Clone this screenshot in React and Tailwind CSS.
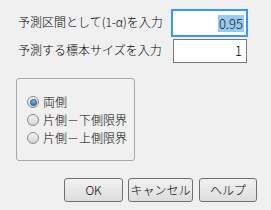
const font = { fontFamily: '"Noto Sans CJK JP", "Noto Sans", sans-serif' };

function Radio({ checked, label }) {
  return (
    <div className="flex h-[18px] items-center gap-[4px]">
      <span className="flex h-[12px] w-[12px] items-center justify-center rounded-full border border-[#8a8a8a] bg-gradient-to-b from-[#f4f4f4] to-[#d4d4d4]">
        {checked && (
          <span className="h-[7px] w-[7px] rounded-full border border-[#1c5180] bg-gradient-to-b from-[#7fc0ec] to-[#1f7fc4]" />
        )}
      </span>
      <span className="text-[12px] leading-[16px] text-black">{label}</span>
    </div>
  );
}

function Button({ children, width }) {
  return (
    <button
      className={`flex h-[24px] items-center justify-center rounded-[3px] border border-[#707070] bg-gradient-to-b from-[#f2f2f2] to-[#dddddd] text-[12px] leading-[16px] text-black ${width}`}
    >
      {children}
    </button>
  );
}

export default function App() {
  return (
    <div className="flex h-[210px] w-[271px] flex-col bg-[#f0f0f0] font-light" style={font}>
      <div className="mt-[9px] flex">
        <span className="ml-[18px] mt-[5px] text-[12px] leading-[16px] text-black">予測区間として(1-α)を入力</span>
        <div className="ml-auto mr-[23px] flex h-[28px] w-[77px] items-center justify-end border-2 border-[#3399ff] bg-white pr-[2px]">
          <span className="bg-[#99c9ef] px-[1px] text-[13px] leading-[17px] text-[#1a1a1a]">0.95</span>
        </div>
      </div>
      <div className="mt-[2px] flex">
        <span className="ml-[18px] mt-[3px] text-[12px] leading-[16px] text-black">予測する標本サイズを入力</span>
        <div className="ml-auto mr-[24px] flex h-[24px] w-[74px] items-center justify-end border border-[#7a7a7a] bg-white pr-[4px]">
          <span className="text-[13px] leading-[16px] text-black">1</span>
        </div>
      </div>
      <div className="ml-[16px] mt-[15px] flex h-[83px] w-[119px] flex-col rounded-[3px] border border-[#a8a8a8] pl-[10px] pt-[14px]">
        <Radio checked label="両側" />
        <Radio label="片側－下側限界" />
        <Radio label="片側－上側限界" />
      </div>
      <div className="ml-[64px] mt-[17px] flex">
        <Button width="w-[59px]">OK</Button>
        <div className="w-[5px]" />
        <Button width="w-[65px]">キャンセル</Button>
        <div className="w-[6px]" />
        <Button width="w-[58px]">ヘルプ</Button>
      </div>
    </div>
  );
}
